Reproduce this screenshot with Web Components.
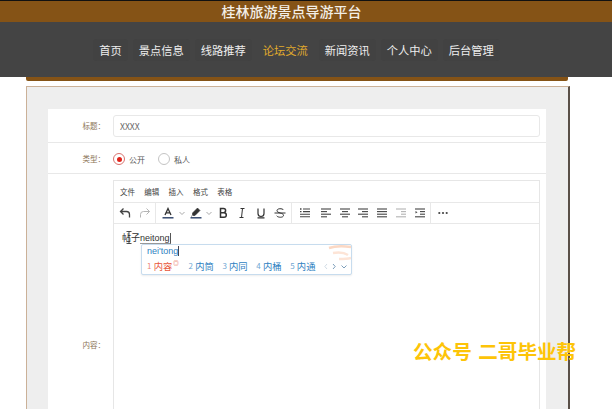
<!DOCTYPE html>
<html lang="zh">
<head>
<meta charset="utf-8">
<title>桂林旅游景点导游平台</title>
<style>
html, body { margin: 0; height: 409px; overflow: hidden; background: #fff; }
body { font-family: "Noto Sans CJK SC", "Liberation Sans", sans-serif; }
</style>
</head>
<body>
<site-header></site-header>
<form-panel></form-panel>
<script>
const FONT = '"Noto Sans CJK SC", "Liberation Sans", sans-serif';

class SiteHeader extends HTMLElement {
    constructor() {
        super();
        this.attachShadow({ mode: 'open' });
        const links = ['首页', '景点信息', '线路推荐', '论坛交流', '新闻资讯', '个人中心', '后台管理'];
        this.shadowRoot.innerHTML = `
            <style>
                :host { display: block; font-family: ${FONT}; }
                .title {
                    height: 21px;
                    border-top: 1px solid #111;
                    background: #855316;
                    color: #f3efe8;
                    font-size: 14px;
                    font-weight: 500;
                    line-height: 21px;
                    text-align: center;
                    padding-right: 29px;
                }
                nav {
                    height: 55px;
                    background: #444;
                    display: flex;
                    justify-content: center;
                    align-items: center;
                    gap: 5px;
                    padding-right: 19px;
                }
                a {
                    color: #eee;
                    font-size: 11.25px;
                    line-height: 22px;
                    padding: 0 6px;
                    background: #424242;
                    border-radius: 4px;
                }
                a.on { color: #e0aa2c; background: none; }
                .strip {
                    height: 4px;
                    margin: 0 44px 0 26px;
                    background: #855316;
                    border-radius: 0 0 2px 2px;
                }
            </style>
            <div class="title">桂林旅游景点导游平台</div>
            <nav>${links.map(l => `<a class="${l === '论坛交流' ? 'on' : ''}">${l}</a>`).join('')}</nav>
            <div class="strip"></div>
        `;
    }
}
customElements.define('site-header', SiteHeader);

class FormRow extends HTMLElement {
    constructor() {
        super();
        this.attachShadow({ mode: 'open' });
        this.shadowRoot.innerHTML = `
            <style>
                :host {
                    display: grid;
                    grid-template-columns: 57px 1fr;
                    column-gap: 8px;
                    padding: var(--pad, 6px) 6px var(--pad-b, 6px) 0;
                    border-bottom: 1px solid #e8e8e8;
                    font-family: "Noto Sans CJK TC", ${FONT};
                }
                .label {
                    color: #8b7355;
                    font-size: 7.5px;
                    text-align: right;
                    align-self: center;
                    padding-bottom: 2px;
                }
            </style>
            <div class="label"><slot name="label"></slot></div>
            <div><slot></slot></div>
        `;
    }
}
customElements.define('form-row', FormRow);

class RadioGroup extends HTMLElement {
    constructor() {
        super();
        this.attachShadow({ mode: 'open' });
        this.shadowRoot.innerHTML = `
            <style>
                :host { display: flex; align-items: center; height: 18px; font-size: 8px; color: #555; font-family: ${FONT}; }
                .dot { width: 10px; height: 10px; border: 1px solid #c4c4c4; border-radius: 50%; margin-right: 4px; display: flex; align-items: center; justify-content: center; }
                .dot.on { border-color: #d9736f; }
                .dot.on::after { content: ""; width: 5px; height: 5px; background: #e0231a; border-radius: 50%; }
                .gap { width: 13px; }
            </style>
            <span class="dot on"></span><span>公开</span><span class="gap"></span>
            <span class="dot"></span><span>私人</span>
        `;
    }
}
customElements.define('radio-group', RadioGroup);

class RichEditor extends HTMLElement {
    constructor() {
        super();
        this.attachShadow({ mode: 'open' });
        // one toolbar cell, the icon is drawn in a 12x12 box
        const ic = (w, d, extra = '') => `<span class="cell" style="width:${w}px;${extra}"><svg width="12" height="12" viewBox="0 0 12 12" fill="none" stroke="#444" stroke-width="1">${d}</svg></span>`;
        const rows = (r) => r.map(([a, b], i) => `<path d="M${a} ${2 + i * 2.6}H${b}" stroke-width="1.1"/>`).join('');
        const chev = '<path d="M3.5 5 6 7.5 8.5 5" stroke="#aaa"/>';
        this.shadowRoot.innerHTML = `
            <style>
                :host { display: block; border: 1px solid #e6e6e6; border-bottom: 0; height: 330px; font-family: ${FONT}; position: relative; }
                .menu { height: 21px; display: flex; align-items: center; gap: 9.3px; padding-left: 6px; font-size: 7.5px; color: #444; border-bottom: 1px solid #e8e8e8; }
                .tools { height: 20px; display: flex; align-items: center; border-bottom: 1px solid #e8e8e8; }
                .grp { height: 100%; display: flex; align-items: center; border-right: 1px solid #e8e8e8; box-sizing: border-box; flex: none; }
                .grp:last-child { border-right: 0; }
                .cell { display: flex; justify-content: center; flex: none; }
                svg { display: block; flex: none; }
                .body { padding: 8px 8px; font-size: 9px; color: #333; line-height: 12px; position: relative; }
                .py-under { font-family: "Liberation Sans", sans-serif; border-bottom: 1px solid #999; border-right: 1px solid #555; }
                .beam { position: absolute; left: 12px; top: 7px; }
                .ime {
                    position: absolute;
                    left: 26.5px; top: 63px;
                    width: 211px; height: 31px;
                    background: #fff;
                    border: 1px solid #c7dcee;
                    border-radius: 2px;
                    box-shadow: 0 1px 2px rgba(0,0,0,.08);
                    font-size: 9.3px;
                    color: #2f7fc1;
                    box-sizing: border-box;
                    overflow: hidden;
                }
                .py { padding-left: 5.5px; line-height: 13px; height: 13px; font-family: "Liberation Sans", sans-serif; font-size: 9px; position: relative; }
                .py b { font-weight: 400; border-right: 1px solid #445; }
                .cands { display: flex; padding: 1px 0 0 5.5px; line-height: 14px; position: relative; }
                .cands > span { display: flex; margin-right: 8.6px; }
                .cands i { font-style: normal; font-size: 8px; opacity: .7; width: 6.7px; }
                .cands .first { color: #e8563a; }
                .sup { font-size: 5.5px; line-height: 8px; width: 7.6px; text-align: center; }
                .nav { position: absolute; right: 3px; bottom: 4px; }
                .deco { position: absolute; right: 0; top: 0; }
            </style>
            <div class="menu"><span>文件</span><span>编辑</span><span>插入</span><span>格式</span><span>表格</span></div>
            <div class="tools">
                <div class="grp" style="width:42px;padding-left:1.5px">
                    ${ic(19.5, '<path d="M4.5 1.5 1.5 4.5l3 3M1.5 4.5h6a3 3 0 0 1 3 3v3" stroke-width="1.3"/>')}
                    ${ic(19.5, '<path d="M7.5 1.5l3 3-3 3M10.5 4.5h-6a3 3 0 0 0-3 3v3" stroke="#b5b5b5"/>')}
                </div>
                <div class="grp" style="width:136px;padding-left:3px">
                    ${ic(17, '<path d="M3 8 6 1.5 9 8M4.2 5.8h3.6" stroke="#333" stroke-width="1.3"/><path d="M.5 10.8h11" stroke="#2a3f66" stroke-width="1.4"/>')}
                    ${ic(11, chev)}
                    ${ic(18, '<path d="M2.5 8V6L7.5 1 10 3.5 5 8.5H3zM1 9.5l1.5-1" fill="#333" stroke="#333" stroke-width=".6"/><path d="M.5 10.8h11" stroke="#2a3f66" stroke-width="1.4"/>')}
                    ${ic(7, chev)}
                    <span style="width:1.5px"></span>
                    ${ic(19, '<path d="M3.5 1.5h3a2 2 0 0 1 0 4.2h-3zM3.5 5.7h3.5a2.2 2.2 0 0 1 0 4.6H3.5z" stroke="#333" stroke-width="1.5"/>')}
                    ${ic(19, '<path d="M4.5 1.5h4M3.5 10.5h4M6.5 1.5 5.5 10.5" stroke="#333"/>')}
                    ${ic(18.5, '<path d="M3 1.5v5a3 3 0 0 0 6 0v-5M2.5 10.8h7" stroke="#333" stroke-width="1.2"/>')}
                    ${ic(19.5, '<path d="M9.5 3C8.5 1.2 3 1.2 3 3.6c0 2.8 6.5 2 6.5 4.8 0 2.4-5.5 2.4-6.8.4M.5 6h11" stroke="#333"/>')}
                </div>
                <div class="grp" style="width:139px;padding-left:3px">
                    ${ic(19, '<path d="M1 2h1.5M1 4.6h1.5" stroke-width="1.3"/><path d="M4 2h7M4 4.6h7M1 7.2h10M1 9.8h10" stroke-width="1.1"/>', 'margin-right:2px')}
                    ${ic(19, rows([[1, 11], [1, 7], [1, 11], [1, 7]]))}
                    ${ic(19, rows([[1, 11], [3, 9], [1, 11], [3, 9]]))}
                    ${ic(18.5, rows([[1, 11], [5, 11], [1, 11], [5, 11]]))}
                    ${ic(19, rows([[1, 11], [1, 11], [1, 11], [1, 11]]))}
                    ${ic(18.5, rows([[1, 11], [6, 11], [6, 11], [1, 11]]), 'opacity:.4')}
                    ${ic(19, rows([[1, 11], [6, 11], [6, 11], [1, 11]]) + '<path d="M1.5 4l2 1.3-2 1.3z" fill="#444" stroke="none"/>')}
                </div>
                <div class="grp" style="padding-left:7px">
                    <svg width="10" height="4" viewBox="0 0 10 4" fill="#444"><circle cx="1.3" cy="2" r="1.1"/><circle cx="5" cy="2" r="1.1"/><circle cx="8.7" cy="2" r="1.1"/></svg>
                </div>
            </div>
            <div class="body">帖子<span class="py-under">neitong</span>
                <svg class="beam" width="6" height="13" viewBox="0 0 6 13" fill="none" stroke="#222" stroke-width=".8"><path d="M.5.5h5M.5 12.5h5M3 .5v12"/></svg>
            </div>
            <div class="ime">
                <svg class="deco" width="24" height="16" viewBox="0 0 24 16" fill="none" stroke="#fde4d6" stroke-width="2.5"><path d="M2 3C8 1 16 1 24 2" stroke="#fbd8c4"/><path d="M6 8c6-1 12 0 15 2M12 14c4 0 8 0 12-1"/></svg>
                <div class="py"><b>nei'tong</b></div>
                <div class="cands">
                    <span class="first"><i>1</i>内容<span class="sup">◎</span></span>
                    <span><i>2</i>内筒</span><span><i>3</i>内同</span><span><i>4</i>内桶</span><span><i>5</i>内通</span>
                </div>
                <svg class="nav" width="24" height="7" viewBox="0 0 24 7" fill="none" stroke="#6e93b2" stroke-width=".9"><path d="M3 1 .8 3.5 3 6" stroke="#ccd8e2"/><path d="M9 1l2.2 2.5L9 6"/><path d="M17.5 2.5 20 5l2.5-2.5"/></svg>
            </div>
        `;
    }
}
customElements.define('rich-editor', RichEditor);

class FormPanel extends HTMLElement {
    constructor() {
        super();
        this.attachShadow({ mode: 'open' });
        this.shadowRoot.innerHTML = `
            <style>
                :host {
                    display: block;
                    box-sizing: border-box;
                    width: 544px;
                    height: 323px;
                    margin: 5px 0 0 26px;
                    padding: 22px 22px 0 21px;
                    background: #eee;
                    border: 1px solid #cbb198;
                    border-right: 2px solid #5a5048;
                    border-bottom: 0;
                    font-family: ${FONT};
                    position: relative;
                }
                .card { background: #fff; height: 300px; overflow: hidden; }
                .input {
                    box-sizing: border-box;
                    height: 22px;
                    border: 1px solid #e8e8e8;
                    border-radius: 3px;
                    padding-left: 6px;
                    font-size: 8.6px;
                    line-height: 20px;
                    color: #666;
                }
                .mark {
                    position: absolute;
                    left: 386px; top: 251px;
                    color: #fdc408;
                    font-size: 19.6px;
                    font-weight: 700;
                    line-height: 26px;
                    word-spacing: 2px;
                    white-space: nowrap;
                }
            </style>
            <div class="card">
                <form-row style="--pad:6px;--pad-b:5px">
                    <span slot="label">标题：</span>
                    <div class="input">XXXX</div>
                </form-row>
                <form-row style="--pad:7px;--pad-b:5px">
                    <span slot="label">类型：</span>
                    <radio-group></radio-group>
                </form-row>
                <form-row style="--pad:6px;--pad-b:0;border-bottom:0">
                    <span slot="label">内容：</span>
                    <rich-editor></rich-editor>
                </form-row>
            </div>
            <div class="mark">公众号 二哥毕业帮</div>
        `;
    }
}
customElements.define('form-panel', FormPanel);
</script>
</body>
</html>
